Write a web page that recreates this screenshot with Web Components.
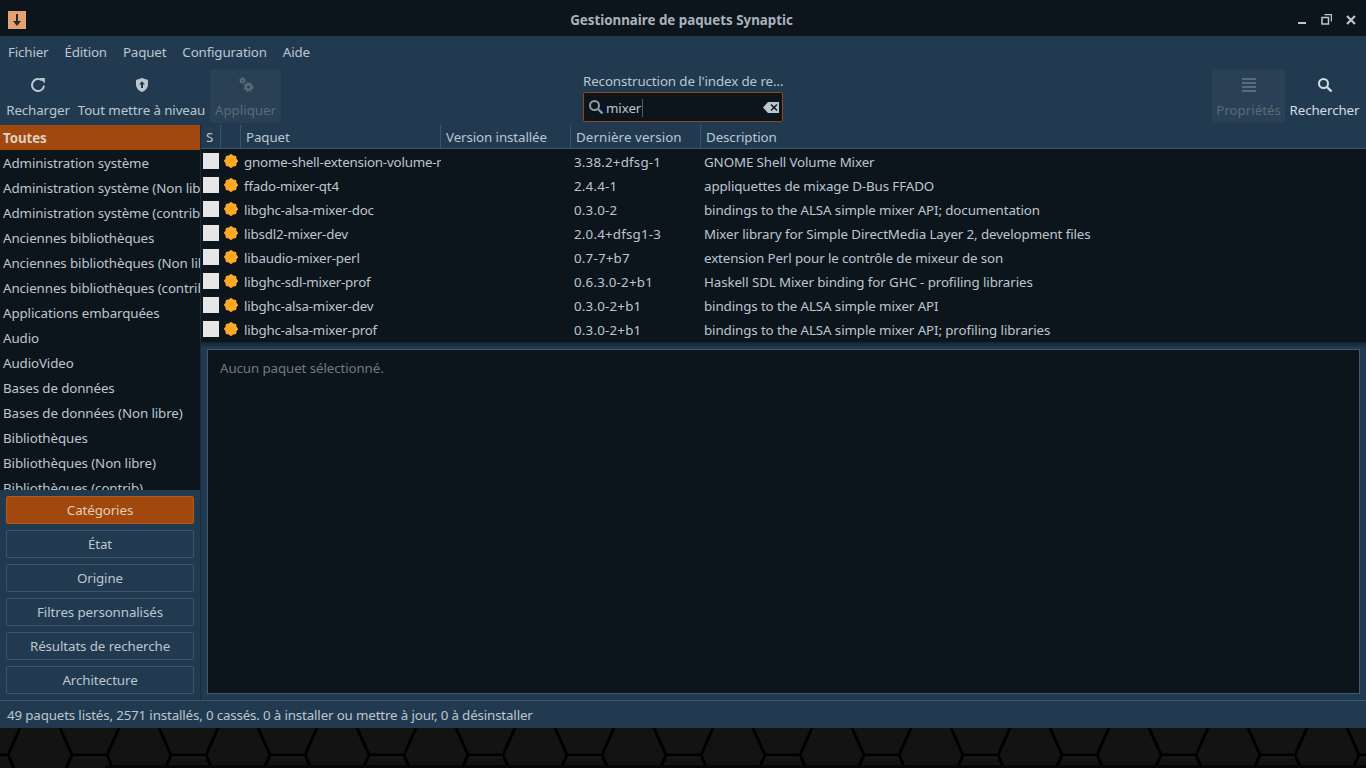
<!DOCTYPE html>
<html><head><meta charset="utf-8"><style>
html,body{margin:0;height:768px;overflow:hidden;background:#0b0b0b}
body{font:13.33px "Noto Sans",sans-serif;letter-spacing:-.1px;color:#bcc6cf}
syn-app{height:768px}
</style></head><body>
<syn-app></syn-app>
<script>
function burst(){let p=[];for(let i=0;i<16;i++){const r=i%2?6:7.2,a=i*Math.PI/8;p.push((7+r*Math.cos(a)).toFixed(2)+' '+(7+r*Math.sin(a)).toFixed(2));}return 'M'+p.join('L')+'z';}
const ICONS={
reload:'<svg width="16" height="16" viewBox="0 0 16 16"><path d="M14 8.600A6 6 0 1 1 11.800 3.300" fill="none" stroke="currentColor" stroke-width="2"/><path d="M9.400 1h5.400v5.400z" fill="currentColor"/></svg>',
shield:'<svg width="16" height="16" viewBox="0 0 16 16"><path fill="currentColor" fill-rule="evenodd" d="M8 1l6 2v4c0 4-2.600 6.700-6 8-3.400-1.300-6-4-6-8V3zM8 4.200L5 7.500h2V11h2V7.500h2z"/></svg>',
gears:'<svg width="16" height="16" viewBox="0 0 16 16" fill="none" stroke="currentColor"><circle cx="4.500" cy="3.500" r="1.800" stroke-width="1.800"/><circle cx="4.500" cy="3.500" r="2.800" stroke-width="1" stroke-dasharray="1.400 1.530"/><circle cx="10.500" cy="10" r="2.600" stroke-width="2.200"/><circle cx="10.500" cy="10" r="4.300" stroke-width="1.400" stroke-dasharray="2 1.600"/></svg>',
props:'<svg width="16" height="16" viewBox="0 0 16 16"><path fill="currentColor" d="M1 1h14v2H1zM1 5h14v2H1zM1 9h14v2H1zM1 13h14v2H1z"/></svg>',
search:'<svg width="16" height="16" viewBox="0 0 16 16"><circle cx="6.500" cy="6.500" r="4.500" fill="none" stroke="currentColor" stroke-width="2"/><path d="M10 10l4.500 4.500" stroke="currentColor" stroke-width="2.400"/></svg>',
clear:'<svg width="16" height="11" viewBox="0 0 16 11"><path fill="currentColor" fill-rule="evenodd" d="M5 0h11v11H5L0 5.500zM7.500 3L10 5.500 7.500 8l1 1L11 6.500 13.500 9l1-1L12 5.500 14.500 3l-1-1L11 4.500 8.500 2z"/></svg>',
badge:'<svg width="14" height="14" viewBox="0 0 14 14"><path fill="#ffa726" d="'+burst()+'"/></svg>'
};
function def(name,css,html){customElements.define(name,class extends HTMLElement{constructor(){super();this.attachShadow({mode:'open'}).innerHTML='<style>'+css+'</style>'+(typeof html==='function'?html(this):html);}});}

def('syn-titlebar',`:host{display:grid;grid-template-columns:1fr auto 1fr;height:36px;box-sizing:border-box;align-items:center;background:#0d151c;padding:3px 10px 0 8px;font-weight:700;letter-spacing:0;color:#a9b3bc}
.ico{width:18px;height:18px;background:#e3a26f;display:flex;align-items:center;justify-content:center}
.w{display:flex;gap:14px;align-items:center;justify-self:end}svg{display:block}.t{margin-left:-1px}`,
`<div class="ico"><svg width="10" height="14" viewBox="0 0 10 14"><path d="M5 1v9" stroke="#2b2a28" stroke-width="2"/><path d="M1 8h8l-4 5z" fill="#2b2a28"/></svg></div>
<div class="t">Gestionnaire de paquets Synaptic</div>
<div class="w"><svg width="10" height="10" viewBox="0 0 10 10"><path d="M1 8h8" stroke="#bcc6cf" stroke-width="2"/></svg>
<svg width="11" height="11" viewBox="0 0 11 11"><path d="M3.500.5h7v7M1 3.500h6.500v6.500H1z" fill="none" stroke="#bcc6cf" stroke-width="1.500"/></svg>
<svg width="10" height="10" viewBox="0 0 10 10"><path d="M1 1l8 8M9 1l-8 8" stroke="#bcc6cf" stroke-width="2.200"/></svg></div>`);

def('syn-menubar',`:host{display:flex;height:32px;box-sizing:border-box;padding:0 0 1px 8px;align-items:center;gap:16px;color:#bcc6cf;letter-spacing:-.15px}`,
`<span>Fichier</span><span>Édition</span><span>Paquet</span><span>Configuration</span><span>Aide</span>`);

def('syn-toolbtn',`:host{display:flex;flex-direction:column;align-items:center;height:54px;box-sizing:border-box;color:#bcc6cf}
:host([off]){background:#2a4054;border-radius:3px;color:#5b6b79;letter-spacing:0}
:host([hot]){color:#d3dde6}
.i{height:16px;margin-top:8px;margin-bottom:6px}
svg{display:block}span{line-height:22px;height:20px;white-space:nowrap}`,
h=>`<div class="i">${ICONS[h.getAttribute('icon')]}</div><span><slot></slot></span>`);

def('syn-search',`:host{display:flex;flex-direction:column;width:200px;flex:none}
.l{height:23px;line-height:24px;color:#bcc6cf;white-space:nowrap}
.b{height:30px;box-sizing:border-box;background:#0d151c;border:1px solid #8f4718;border-radius:2px;display:flex;align-items:center;padding:0 3px 0 4px;color:#bcc6cf}
.b svg{display:block;color:#8d99a3}.v{margin-left:2px;flex:1;padding-top:2px}.c{width:1px;height:18px;background:#3f617d;display:inline-block;vertical-align:-4px;margin-left:1px}
.b svg:last-child{color:#bcc6cf}`,
`<div class="l">Reconstruction de l'index de re...</div><div class="b">${ICONS.search}<span class="v">mixer<i class="c"></i></span>${ICONS.clear}</div>`);

def('syn-toolbar',`:host{display:flex;height:57px;align-items:flex-start;padding:1px 6px 0;box-sizing:border-box;background:#223a50}
.a{display:flex;width:577px;gap:8px;flex:none}.r{display:flex;margin-left:auto;gap:4px}`,
`<div class="a"><syn-toolbtn icon="reload" style="width:64px">Recharger</syn-toolbtn><syn-toolbtn icon="shield" style="width:127px">Tout mettre à niveau</syn-toolbtn><syn-toolbtn icon="gears" off style="width:71px;margin-left:-3px">Appliquer</syn-toolbtn></div><syn-search></syn-search><div class="r"><syn-toolbtn icon="props" off style="width:73px">Propriétés</syn-toolbtn><syn-toolbtn icon="search" hot style="width:71px">Rechercher</syn-toolbtn></div>`);

const cats=['Administration système','Administration système (Non libre)','Administration système (contrib)','Anciennes bibliothèques','Anciennes bibliothèques (Non libre)','Anciennes bibliothèques (contrib)','Applications embarquées','Audio','AudioVideo','Bases de données','Bases de données (Non libre)','Bibliothèques','Bibliothèques (Non libre)','Bibliothèques (contrib)'];
def('syn-sidebar',`:host{display:flex;flex-direction:column;width:200px;height:100%;flex:none;background:#223a50}
.l{height:365px;overflow:hidden;background:#0d151c}
.s{height:25px;line-height:27px;padding-left:3px;white-space:nowrap;overflow:hidden;color:#bcc6cf}
.sel{background:#a0480e;font-weight:700;color:#e0d0c0}
.b{display:flex;flex-direction:column;gap:6px;padding:6px 6px 0}
button{all:unset;box-sizing:border-box;height:28px;border:1px solid #3c5368;border-radius:2px;text-align:center;background:#223a50;color:#bcc6cf;font:inherit;letter-spacing:inherit;line-height:25px}
button.on{background:#a0480e;border-color:#b75a1c;color:#e5cdb5}`,
`<div class="l"><div class="s sel">Toutes</div>${cats.map(c=>`<div class="s">${c}</div>`).join('')}</div><div class="b"><button class="on">Catégories</button><button>État</button><button>Origine</button><button>Filtres personnalisés</button><button>Résultats de recherche</button><button>Architecture</button></div>`);

const rows=[['gnome-shell-extension-volume-mixer','3.38.2+dfsg-1','GNOME Shell Volume Mixer'],['ffado-mixer-qt4','2.4.4-1','appliquettes de mixage D-Bus FFADO'],['libghc-alsa-mixer-doc','0.3.0-2','bindings to the ALSA simple mixer API; documentation'],['libsdl2-mixer-dev','2.0.4+dfsg1-3','Mixer library for Simple DirectMedia Layer 2, development files'],['libaudio-mixer-perl','0.7-7+b7','extension Perl pour le contrôle de mixeur de son'],['libghc-sdl-mixer-prof','0.6.3.0-2+b1','Haskell SDL Mixer binding for GHC - profiling libraries'],['libghc-alsa-mixer-dev','0.3.0-2+b1','bindings to the ALSA simple mixer API'],['libghc-alsa-mixer-prof','0.3.0-2+b1','bindings to the ALSA simple mixer API; profiling libraries']];
const cols='20px 20px 200px 130px 130px 1fr';
def('syn-list',`:host{display:block;height:217px;background:#0d151c;overflow:hidden}
.h{display:grid;grid-template-columns:${cols};height:24px;background:#223a50;border-bottom:1px solid #3c5368;box-sizing:border-box}
.h div{border-right:1px solid #3c5368;padding-left:5px;line-height:25px;box-sizing:border-box;white-space:nowrap;overflow:hidden}
.h div:last-child{border-right:0}.h div:nth-child(5){letter-spacing:.1px}
.r{display:grid;grid-template-columns:${cols};height:24px;align-items:center;white-space:nowrap}
.r>*{overflow:hidden}
.cb{width:16px;height:16px;background:#e6e6e6;margin-left:2px}.bd{display:flex;padding-left:3px}svg{display:block}
.n{padding-left:3px;align-self:start;height:24px;line-height:26px}
.p{letter-spacing:-.2px}.v{letter-spacing:.2px}`,
`<div class="h"><div>S</div><div></div><div>Paquet</div><div>Version installée</div><div>Dernière version</div><div>Description</div></div>${rows.map(r=>`<div class="r"><div class="cb"></div><div class="bd">${ICONS.badge}</div><div class="n p">${r[0]}</div><div></div><div class="n v">${r[1]}</div><div class="n">${r[2]}</div></div>`).join('')}`);

def('syn-details',`:host{display:block;margin:7px 6px 6px 6px;height:345px;box-sizing:border-box;border:1px solid #3f5a72;background:#0d151c;padding:9px 12px;color:#6b7a87}`,`Aucun paquet sélectionné.`);

def('syn-status',`:host{display:block;height:28px;box-sizing:border-box;border-top:1px solid #3c5368;background:#223a50;line-height:29px;padding-left:7px;color:#bcc6cf;letter-spacing:-.15px}`,`49 paquets listés, 2571 installés, 0 cassés. 0 à installer ou mettre à jour, 0 à désinstaller`);

def('syn-desktop',`:host{display:block;height:40px;background:#060606;overflow:hidden}svg{display:block}`,
`<svg width="1366" height="40"><defs><filter id="b"><feGaussianBlur stdDeviation=".5"/></filter><pattern id="p" width="99" height="54" patternUnits="userSpaceOnUse" x="8" y="0"><rect width="99" height="54" fill="#131313"/><path d="M65 29H98" stroke="#1d2833" stroke-width="1.200" fill="none"/><path d="M12 0L0 27L12 54M52 0L64 27L52 54M64 27H99" stroke="#050505" stroke-width="3" fill="none" filter="url(#b)"/></pattern></defs><rect width="1366" height="40" fill="url(#p)"/><path d="M105 38.500H1366" stroke="#070707" stroke-width="3"/></svg>`);

def('syn-app',`:host{display:flex;flex-direction:column;width:1366px}
.main{display:flex;height:575px;background:#223a50}.right{flex:1;min-width:0;display:flex;flex-direction:column;border-left:1px solid #1a2b3b;background:linear-gradient(#15242f 217px,#223a50 223px)}
.top{background:#223a50}`,
`<syn-titlebar></syn-titlebar><div class="top"><syn-menubar></syn-menubar><syn-toolbar></syn-toolbar></div><div class="main"><syn-sidebar></syn-sidebar><div class="right"><syn-list></syn-list><syn-details></syn-details></div></div><syn-status></syn-status><syn-desktop></syn-desktop>`);
</script></body></html>
